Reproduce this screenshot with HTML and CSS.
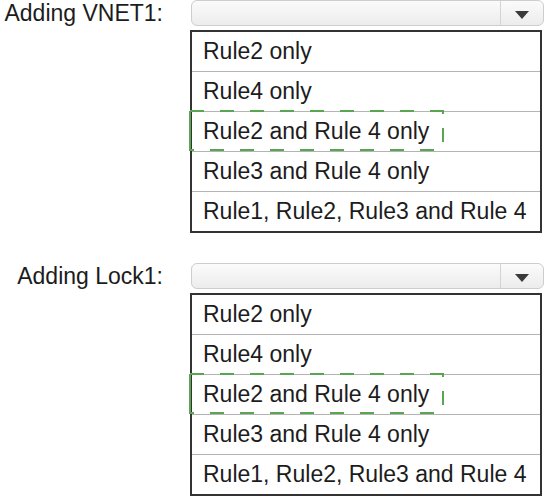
FILE: index.html
```html
<!DOCTYPE html>
<html lang="en">
  <head>
    <meta charset="UTF-8" />
    <title>Adding VNET1 / Lock1</title>
    <link rel="stylesheet" href="styles.css">
  </head>
  <body>
    <div class="page">
      <!-- VNET1 -->
      <section class="field">
        <div class="field-label">Adding VNET1:</div>
        <div class="control">
          <div class="select">
            <span class="select-value"></span>
            <span class="select-arrow">
              <svg width="14" height="8" viewBox="0 0 14 8"><polygon points="0,0 14,0 7,8" fill="#3a3a3a" /></svg>
            </span>
          </div>
          <ul class="options">
            <li>Rule2 only</li>
            <li>Rule4 only</li>
            <li class="answer">
              Rule2 and Rule 4 only
              <svg class="answer-mark" width="256" height="42" viewBox="0 0 256 42">
                <path d="M1 1 V41" />
                <path class="dash-top" d="M1 1 H255" />
                <path d="M254 1 V4" />
                <path d="M254 18 V32" />
                <path class="dash-bottom" d="M0 40 H247" />
              </svg>
            </li>
            <li>Rule3 and Rule 4 only</li>
            <li>Rule1, Rule2, Rule3 and Rule 4</li>
          </ul>
        </div>
      </section>

      <!-- Lock1 -->
      <section class="field">
        <div class="field-label">Adding Lock1:</div>
        <div class="control">
          <div class="select">
            <span class="select-value"></span>
            <span class="select-arrow">
              <svg width="14" height="8" viewBox="0 0 14 8"><polygon points="0,0 14,0 7,8" fill="#3a3a3a" /></svg>
            </span>
          </div>
          <ul class="options">
            <li>Rule2 only</li>
            <li>Rule4 only</li>
            <li class="answer">
              Rule2 and Rule 4 only
              <svg class="answer-mark" width="256" height="42" viewBox="0 0 256 42">
                <path d="M1 1 V41" />
                <path class="dash-top" d="M1 1 H255" />
                <path d="M254 1 V4" />
                <path d="M254 18 V32" />
                <path class="dash-bottom" d="M0 40 H247" />
              </svg>
            </li>
            <li>Rule3 and Rule 4 only</li>
            <li>Rule1, Rule2, Rule3 and Rule 4</li>
          </ul>
        </div>
      </section>
    </div>
  </body>
</html>
```

FILE: styles.css
```css
body {
  margin: 0;
  background: #fff;
  color: #1c1c1c;
  font-family: "Liberation Sans", Arial, sans-serif;
  font-size: 23px;
}
.page {
  display: flex;
  flex-direction: column;
  gap: 30px;
}
.field {
  display: grid;
  grid-template-columns: 190px 354px;
  align-items: start;
}
.field-label {
  line-height: 26px;
  text-align: right;
  padding-right: 27px;
  white-space: nowrap;
}
.control {
  display: flex;
  flex-direction: column;
}
.select {
  display: flex;
  height: 26px;
  box-sizing: border-box;
  margin-left: 1px;
  margin-bottom: 4px;
  border: 1px solid #cdcdcd;
  border-radius: 6px;
  background: linear-gradient(#fbfbfb, #ececec);
}
.select-value {
  flex: 1;
}
.select-arrow {
  width: 43px;
  display: flex;
  align-items: center;
  justify-content: center;
  padding-top: 3px;
  box-sizing: border-box;
  border-left: 1px solid #d4d4d4;
}
.options {
  list-style: none;
  margin: 0;
  padding: 0;
  width: 352px;
  box-sizing: border-box;
  border: 2px solid #333;
}
.options li {
  position: relative;
  height: 39px;
  line-height: 39px;
  padding-left: 11px;
  border-top: 1px solid #b4b4b4;
  white-space: nowrap;
}
.options li:first-child {
  border-top: none;
}
.answer-mark {
  position: absolute;
  left: -3px;
  top: -2px;
  fill: none;
  stroke: #5aa552;
  stroke-width: 2;
}
.dash-top {
  stroke-dasharray: 14 16;
}
.dash-bottom {
  stroke-dasharray: 14 16;
  stroke-dashoffset: 9;
}
```
